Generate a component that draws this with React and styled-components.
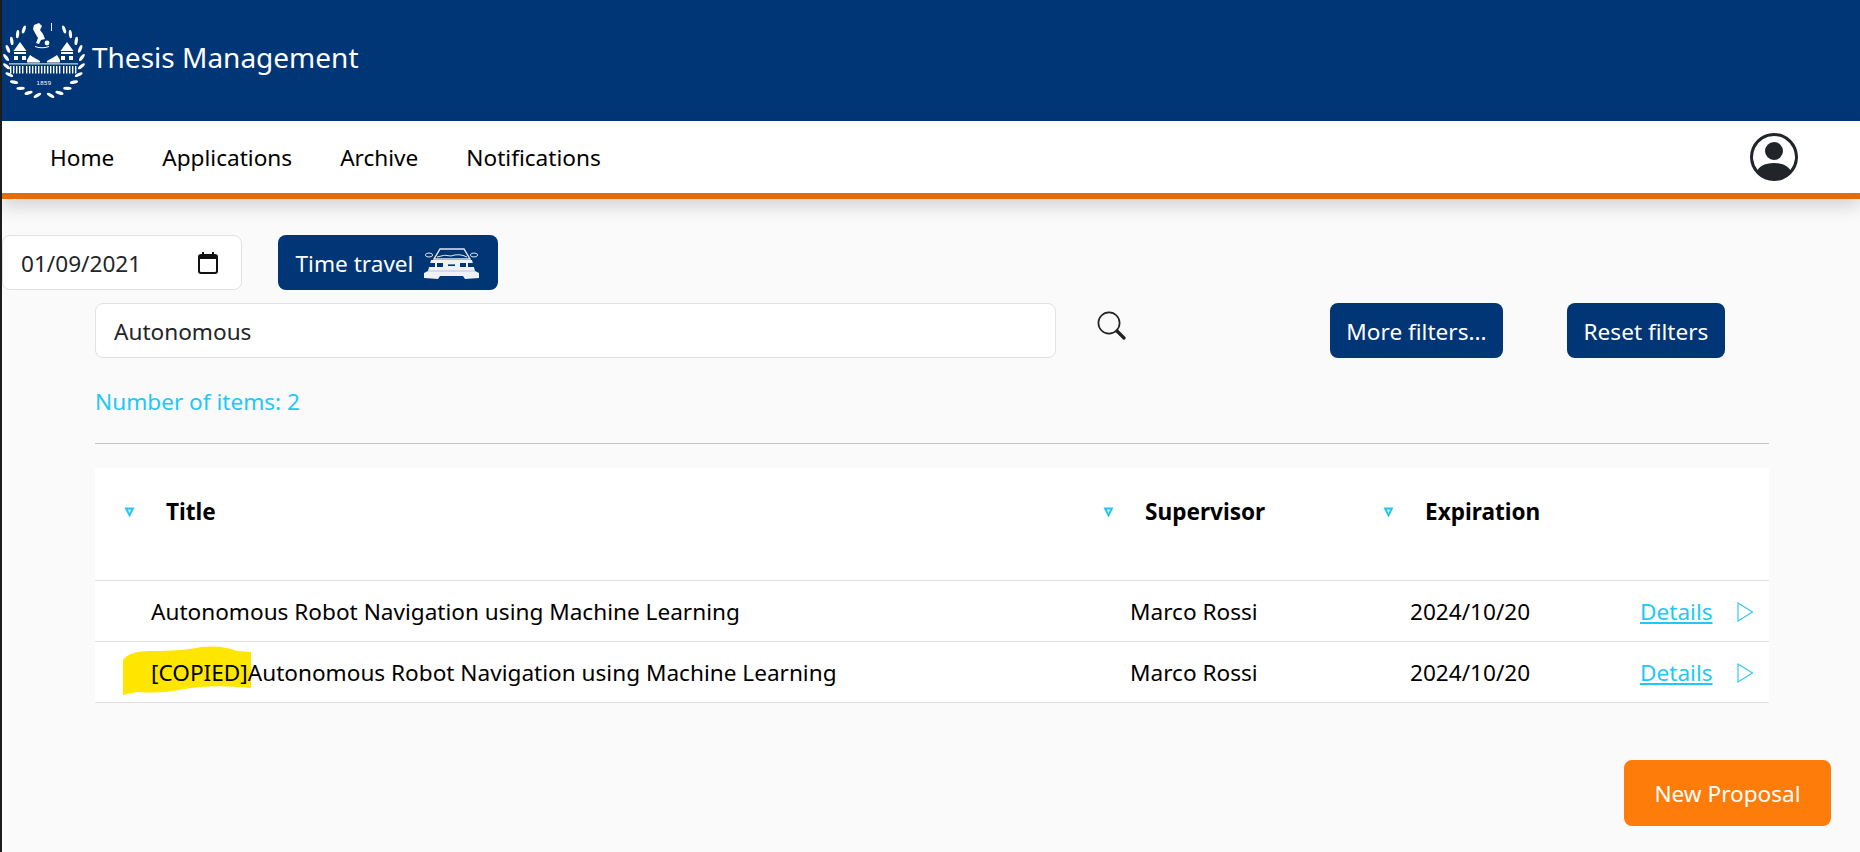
import styled, { createGlobalStyle } from "styled-components";
import { BsPersonCircle } from "react-icons/bs";

const GlobalStyle = createGlobalStyle`
	html, body {
		margin: 0;
		padding: 0;
		background: #fafafa;
	}
	* {
		box-sizing: border-box;
	}
	body {
		font-family: "Noto Sans", "Open Sans", "Liberation Sans", sans-serif;
		color: #000;
	}
`;

const navLinks = [
	{ label: "Home" },
	{ label: "Applications" },
	{ label: "Archive" },
	{ label: "Notifications" },
];

const proposals = [
	{ id: 1, title: "Autonomous Robot Navigation using Machine Learning", supervisor: "Marco Rossi", expiration: "2024/10/20" },
	{ id: 2, copied: true, title: "Autonomous Robot Navigation using Machine Learning", supervisor: "Marco Rossi", expiration: "2024/10/20" },
];

// laurel leaves, one angle per leaf, measured from the bottom of the seal
const leafAngles = [10, 24, 38, 52, 66, 80, 94, 108, 122, 136, 148];
const colonnade = [7, 10, 13, 16, 19, 23, 26, 29, 32, 35, 38, 41, 44, 47, 50, 53, 56, 60, 63, 66, 69, 72];

function Logo() {
	return (
		<svg width="84" height="84" viewBox="0 0 84 84" fill="#fff">
			{leafAngles.map((a) => {
				const rad = (a * Math.PI) / 180;
				const x = Math.sin(rad) * 38;
				const y = Math.cos(rad) * 36;
				return (
					<g key={a}>
						<ellipse cx={41 + x} cy={41 + y} rx="4.2" ry="1.6" transform={`rotate(${-a + 40} ${41 + x} ${41 + y})`} />
						<ellipse cx={41 - x} cy={41 + y} rx="4.2" ry="1.6" transform={`rotate(${a - 40} ${41 - x} ${41 + y})`} />
					</g>
				);
			})}
			{/* figure on top */}
			<path d="M31 6 L36 4 L39 7 L37 11 L40 15 L42 20 L38 21 L36 25 L33 24 L35 19 L32 14 L30 10 Z" />
			<circle cx="44" cy="24" r="2.4" />
			<path d="M32 27 Q39 29.5 46 27 L46 28 Q39 30.5 32 28 Z" />
			<rect x="48" y="4" width="0.9" height="8" />
			{/* towers and main building */}
			<path d="M10.5 32 L17 23 L23.5 32 Z" />
			<path d="M57.5 32 L64 23 L70.5 32 Z" />
			<path d="M11 33 H23 V35 H11 Z M11 37 H15 V41 H11 Z M19 37 H23 V41 H19 Z" />
			<path d="M58 33 H70 V35 H58 Z M58 37 H62 V41 H58 Z M66 37 H70 V41 H66 Z" />
			<path d="M24 41 L27 36 L30 38 L37 42 L37 43.4 L24 43.4 Z" />
			<path d="M57 41 L54 36 L51 38 L44 42 L44 43.4 L57 43.4 Z" />
			<rect x="6" y="44.4" width="69" height="1" />
			{colonnade.map((x) => (
				<rect key={x} x={x} y="47" width="1.4" height="7.5" />
			))}
			<text x="41" y="66" fontSize="6" textAnchor="middle" fontFamily="Liberation Sans, sans-serif" letterSpacing="0.4">1859</text>
		</svg>
	);
}

function CarIcon() {
	return (
		<svg width="57" height="32" viewBox="0 0 57 32">
			<path d="M17 2 L41 2 L47 12 L11 12 Z" fill="none" stroke="#dfe6f0" strokeWidth="1.4" />
			<path d="M14 10 Q22 7 28 9 Q36 6 44 10" fill="none" stroke="#dfe6f0" strokeWidth="1" />
			<ellipse cx="6" cy="8" rx="3.6" ry="2" fill="none" stroke="#dfe6f0" strokeWidth="1" />
			<ellipse cx="51" cy="8" rx="3.6" ry="2" fill="none" stroke="#dfe6f0" strokeWidth="1" />
			<path d="M8 13 L49 13 L52 24 L56 26 L56 31 L42 32 L40 29 L17 29 L15 32 L1 31 L1 26 L5 24 Z" fill="#eef1f6" />
			<path d="M5 24 L52 24" stroke="#b9c5d8" strokeWidth="1" />
			<rect x="6" y="16" width="6" height="4" fill="#003576" />
			<rect x="14" y="16" width="6" height="4" fill="#003576" />
			<rect x="25" y="17.4" width="7" height="1.6" fill="#003576" />
			<rect x="37" y="16" width="6" height="4" fill="#003576" />
			<rect x="45" y="16" width="6" height="4" fill="#003576" />
		</svg>
	);
}

function CalendarIcon() {
	return (
		<svg width="20" height="22" viewBox="0 0 20 22">
			<path d="M1 5 Q1 3 3 3 L17 3 Q19 3 19 5 L19 19 Q19 21 17 21 L3 21 Q1 21 1 19 Z" fill="none" stroke="#111" strokeWidth="2" />
			<path d="M1 4 L19 4 L19 7 L1 7 Z" fill="#111" />
			<rect x="4" y="0" width="2" height="4" fill="#111" />
			<rect x="14" y="0" width="2" height="4" fill="#111" />
		</svg>
	);
}

function SearchIcon() {
	return (
		<svg width="29" height="29" viewBox="0 0 29 29" fill="none" stroke="#222">
			<circle cx="12" cy="12" r="10.6" strokeWidth="1.7" />
			<path d="M20 20 L27 27" strokeWidth="3.2" strokeLinecap="round" />
		</svg>
	);
}

function SortIcon() {
	return (
		<SortMark width="11" height="11" viewBox="0 0 11 11">
			<path d="M0.5 0.5 L10.5 0.5 L5.5 10.5 Z" fill="#22c8f5" />
			<path d="M3.8 2.6 L7.2 2.6 L5.5 6.2 Z" fill="#cdf3fd" />
		</SortMark>
	);
}

function RowArrow() {
	return (
		<svg width="17" height="20" viewBox="0 0 17 20">
			<path d="M1 1 L15.5 10 L1 19 Z" fill="none" stroke="#32c9f4" strokeWidth="1.2" />
		</svg>
	);
}

export default function App() {
	return (
		<Page>
			<GlobalStyle />
			<Banner>
				<Logo />
				<AppTitle>Thesis Management</AppTitle>
			</Banner>
			<NavBar>
				<NavLinks>
					{navLinks.map((link) => (
						<NavLink key={link.label}>{link.label}</NavLink>
					))}
				</NavLinks>
				<Avatar>
					<BsPersonCircle size={48} />
				</Avatar>
			</NavBar>
			<Main>
				<TimeRow>
					<DateField>
						<DateText>01/09/2021</DateText>
						<CalendarIcon />
					</DateField>
					<PrimaryButton $width={220} $gap={10}>
						Time travel
						<CarIcon />
					</PrimaryButton>
				</TimeRow>
				<SearchRow>
					<SearchInput readOnly value="Autonomous" />
					<SearchButton>
						<SearchIcon />
					</SearchButton>
					<FilterActions>
						<PrimaryButton $width={173}>More filters...</PrimaryButton>
						<PrimaryButton $width={158}>Reset filters</PrimaryButton>
					</FilterActions>
				</SearchRow>
				<ItemCount>Number of items: 2</ItemCount>
				<Divider />
				<Table>
					<HeaderRow>
						<HeaderCell><SortIcon />Title</HeaderCell>
						<HeaderCell><SortIcon />Supervisor</HeaderCell>
						<HeaderCell><SortIcon />Expiration</HeaderCell>
					</HeaderRow>
					{proposals.map((p) => (
						<Row key={p.id}>
							<Cell>
								{p.copied && (
									<Highlight width="128" height="49" viewBox="0 0 128 49">
										<path d="M0 14 Q6 5 28 5 Q60 5 78 1 Q100 -1 114 5 L128 6 L128 42 Q90 38 62 43 Q36 48 14 46 L0 49 Z" fill="#ffe600" />
									</Highlight>
								)}
								<CellText>{p.copied && "[COPIED]"}{p.title}</CellText>
							</Cell>
							<Cell><CellText>{p.supervisor}</CellText></Cell>
							<Cell><CellText>{p.expiration}</CellText></Cell>
							<Actions>
								<DetailsLink>Details</DetailsLink>
								<RowArrow />
							</Actions>
						</Row>
					))}
				</Table>
				<Footer>
					<NewButton>New Proposal</NewButton>
				</Footer>
			</Main>
		</Page>
	);
}

const Page = styled.div`
	height: 852px;
	overflow: hidden;
	border-left: 2px solid #1c1c1c;
	background: #fafafa;
`;

const Banner = styled.header`
	height: 121px;
	background: #003576;
	display: flex;
	align-items: center;
	gap: 5px;
	padding-left: 1px;
	padding-top: 1px;
`;

const AppTitle = styled.h1`
	margin: 0 0 9px 0;
	font-size: 28px;
	font-weight: 400;
	color: #fff;
`;

const NavBar = styled.nav`
	position: relative;
	height: 78px;
	background: #fff;
	border-bottom: 6px solid #e46c0a;
	box-shadow: 0 8px 16px rgba(0, 0, 0, 0.15);
	display: flex;
	align-items: center;
	justify-content: space-between;
	padding: 0 62px 0 48px;
`;

const NavLinks = styled.div`
	display: flex;
	gap: 48px;
`;

const NavLink = styled.a`
	font-size: 22.6px;
	color: #000;
`;

const Avatar = styled.div`
	display: flex;
	color: #212529;
`;

const Main = styled.main`
	padding-top: 36px;
`;

const TimeRow = styled.div`
	display: flex;
	gap: 36px;
`;

const DateField = styled.div`
	width: 240px;
	height: 55px;
	background: #fff;
	border: 1px solid #dee2e6;
	border-radius: 8px;
	display: flex;
	align-items: center;
	justify-content: space-between;
	padding: 0 23px 0 18px;
`;

const DateText = styled.span`
	padding-top: 1px;
	font-size: 22.6px;
	color: #212529;
`;

const PrimaryButton = styled.button`
	width: ${(p) => p.$width}px;
	height: 55px;
	padding: 1px 0 0;
	background: #003576;
	border: none;
	border-radius: 8px;
	color: #fff;
	font: inherit;
	font-size: 22.6px;
	display: flex;
	align-items: center;
	justify-content: center;
	gap: ${(p) => p.$gap || 0}px;
`;

const SearchRow = styled.div`
	display: flex;
	align-items: flex-start;
	margin-top: 13px;
	padding-left: 93px;
`;

const SearchInput = styled.input`
	width: 961px;
	height: 55px;
	background: #fff;
	border: 1px solid #dee2e6;
	border-radius: 8px;
	padding: 2px 18px 0;
	font: inherit;
	font-size: 22.6px;
	color: #212529;
	outline: none;
`;

const SearchButton = styled.div`
	margin: 8px 0 0 41px;
	display: flex;
`;

const FilterActions = styled.div`
	display: flex;
	gap: 64px;
	margin-left: 204px;
`;

const ItemCount = styled.div`
	margin: 29px 0 0 93px;
	height: 30px;
	line-height: 30px;
	font-size: 22.6px;
	color: #22c8f5;
`;

const Divider = styled.hr`
	margin: 26px 0 0 93px;
	width: 1674px;
	border: none;
	border-top: 1px solid #c4c4c4;
`;

const Table = styled.section`
	margin: 24px 0 0 93px;
	width: 1674px;
	background: #fff;
`;

const columns = "979px 280px 231px 1fr";

const HeaderRow = styled.div`
	display: grid;
	grid-template-columns: ${columns};
	height: 113px;
	padding: 27px 0 0 29px;
	border-bottom: 1px solid #dee2e6;
`;

const HeaderCell = styled.div`
	display: flex;
	align-items: center;
	gap: 31px;
	height: 32px;
	font-size: 22.6px;
	font-weight: 700;
`;

const SortMark = styled.svg`
	margin-top: 3px;
`;

const Row = styled.div`
	display: grid;
	grid-template-columns: ${columns};
	height: 61px;
	padding-left: 29px;
	border-bottom: 1px solid #dee2e6;
`;

const Cell = styled.div`
	position: relative;
	display: flex;
	align-items: center;
	padding: 1px 0 0 27px;
`;

const Highlight = styled.svg`
	position: absolute;
	left: -1px;
	top: 4px;
`;

const CellText = styled.span`
	position: relative;
	font-size: 22.6px;
`;

const Actions = styled.div`
	display: flex;
	align-items: center;
	gap: 24px;
	padding: 1px 0 0 26px;
`;

const DetailsLink = styled.a`
	font-size: 22.6px;
	color: #22c8f5;
	text-decoration: underline;
`;

const Footer = styled.div`
	display: flex;
	justify-content: flex-end;
	margin-top: 57px;
	padding-right: 29px;
`;

const NewButton = styled.button`
	width: 207px;
	height: 66px;
	background: #fe7c0a;
	border: none;
	border-radius: 8px;
	color: #fff;
	font: inherit;
	font-size: 22.6px;
`;
